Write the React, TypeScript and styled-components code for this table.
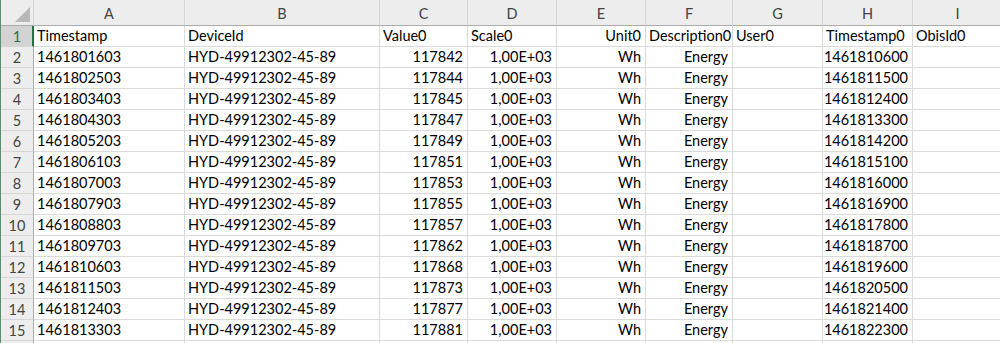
import React from "react";
import styled, { createGlobalStyle } from "styled-components";

const GlobalStyle = createGlobalStyle`
    html, body {
        margin: 0;
        padding: 0;
        background: #FFFFFF;
        overflow: hidden;
    }
`;

const columns = [
    { key: "A", width: 151 },
    { key: "B", width: 195 },
    { key: "C", width: 88 },
    { key: "D", width: 89 },
    { key: "E", width: 89 },
    { key: "F", width: 87 },
    { key: "G", width: 90 },
    { key: "H", width: 90 },
    { key: "I", width: 90 },
];

type Align = "left" | "right";

const headerRow: [string, Align][] = [
    ["Timestamp", "left"],
    ["DeviceId", "left"],
    ["Value0", "left"],
    ["Scale0", "left"],
    ["Unit0", "right"],
    ["Description0", "left"],
    ["User0", "left"],
    ["Timestamp0", "left"],
    ["ObisId0", "left"],
];

const data = [
    ["1461801603", "117842", "1461810600"],
    ["1461802503", "117844", "1461811500"],
    ["1461803403", "117845", "1461812400"],
    ["1461804303", "117847", "1461813300"],
    ["1461805203", "117849", "1461814200"],
    ["1461806103", "117851", "1461815100"],
    ["1461807003", "117853", "1461816000"],
    ["1461807903", "117855", "1461816900"],
    ["1461808803", "117857", "1461817800"],
    ["1461809703", "117862", "1461818700"],
    ["1461810603", "117868", "1461819600"],
    ["1461811503", "117873", "1461820500"],
    ["1461812403", "117877", "1461821400"],
    ["1461813303", "117881", "1461822300"],
];

const Sheet = styled.div`
    display: grid;
    grid-template-columns: 33px ${columns.map((c) => `${c.width}px`).join(" ")};
    grid-auto-rows: 21px;
    grid-template-rows: 26px;
    width: 1000px;
    height: 343px;
    overflow: hidden;
    font-family: Lato, "Open Sans", sans-serif;
    font-size: 14.5px;
    color: #000000;
    border-left: 1px solid #5b8f6f;
    box-sizing: border-box;
`;

const Corner = styled.div`
    position: relative;
    background: #EDEDED;
    border-right: 1px solid #D6D6D6;
    border-bottom: 1px solid #ABABAB;
`;

const Triangle = styled.div`
    position: absolute;
    right: 3px;
    bottom: 3px;
    width: 0;
    height: 0;
    border-left: 15px solid transparent;
    border-bottom: 15px solid #B8B8B8;
`;

const ColHeader = styled.div`
    display: flex;
    align-items: center;
    justify-content: center;
    padding-top: 2px;
    background: #EDEDED;
    border-right: 1px solid #D6D6D6;
    border-bottom: 1px solid #ABABAB;
    color: #444444;
`;

const RowHeader = styled.div<{ $selected?: boolean }>`
    display: flex;
    align-items: center;
    justify-content: center;
    background: ${(p) => (p.$selected ? "#D3D3D3" : "#EDEDED")};
    color: ${(p) => (p.$selected ? "#217346" : "#444444")};
    border-right: ${(p) => (p.$selected ? "2px solid #217346" : "1px solid #ABABAB")};
    border-bottom: 1px solid #D6D6D6;
    box-sizing: border-box;
    padding-left: ${(p) => (p.$selected ? "1px" : "0")};
`;

const Cell = styled.div<{ $align?: Align }>`
    display: flex;
    align-items: center;
    justify-content: ${(p) => (p.$align === "right" ? "flex-end" : "flex-start")};
    padding: 0 4px 0 3px;
    border-right: 1px solid #DADADA;
    border-bottom: 1px solid #DADADA;
    white-space: nowrap;
    overflow: hidden;
    line-height: 20px;
`;

const App = () => {
    const rows = data.map(([ts, val, ts0]) => [
        [ts, "left"],
        ["HYD-49912302-45-89", "left"],
        [val, "right"],
        ["1,00E+03", "right"],
        ["Wh", "right"],
        ["Energy", "right"],
        ["", "left"],
        [ts0, "right"],
        ["", "left"],
    ] as [string, Align][]);

    const allRows: [string, Align][][] = [headerRow, ...rows];

    return (
        <>
            <GlobalStyle />
            <Sheet>
                <Corner>
                    <Triangle />
                </Corner>
                {columns.map((c) => (
                    <ColHeader key={c.key}>{c.key}</ColHeader>
                ))}
                {allRows.map((row, i) => (
                    <React.Fragment key={i}>
                        <RowHeader $selected={i === 0}>{i + 1}</RowHeader>
                        {row.map(([text, align], j) => (
                            <Cell key={j} $align={align}>{text}</Cell>
                        ))}
                    </React.Fragment>
                ))}
                {/* the sliver of row 16 at the bottom edge */}
                <RowHeader />
                {columns.map((c) => (
                    <Cell key={c.key} />
                ))}
            </Sheet>
        </>
    );
};

export default App;
